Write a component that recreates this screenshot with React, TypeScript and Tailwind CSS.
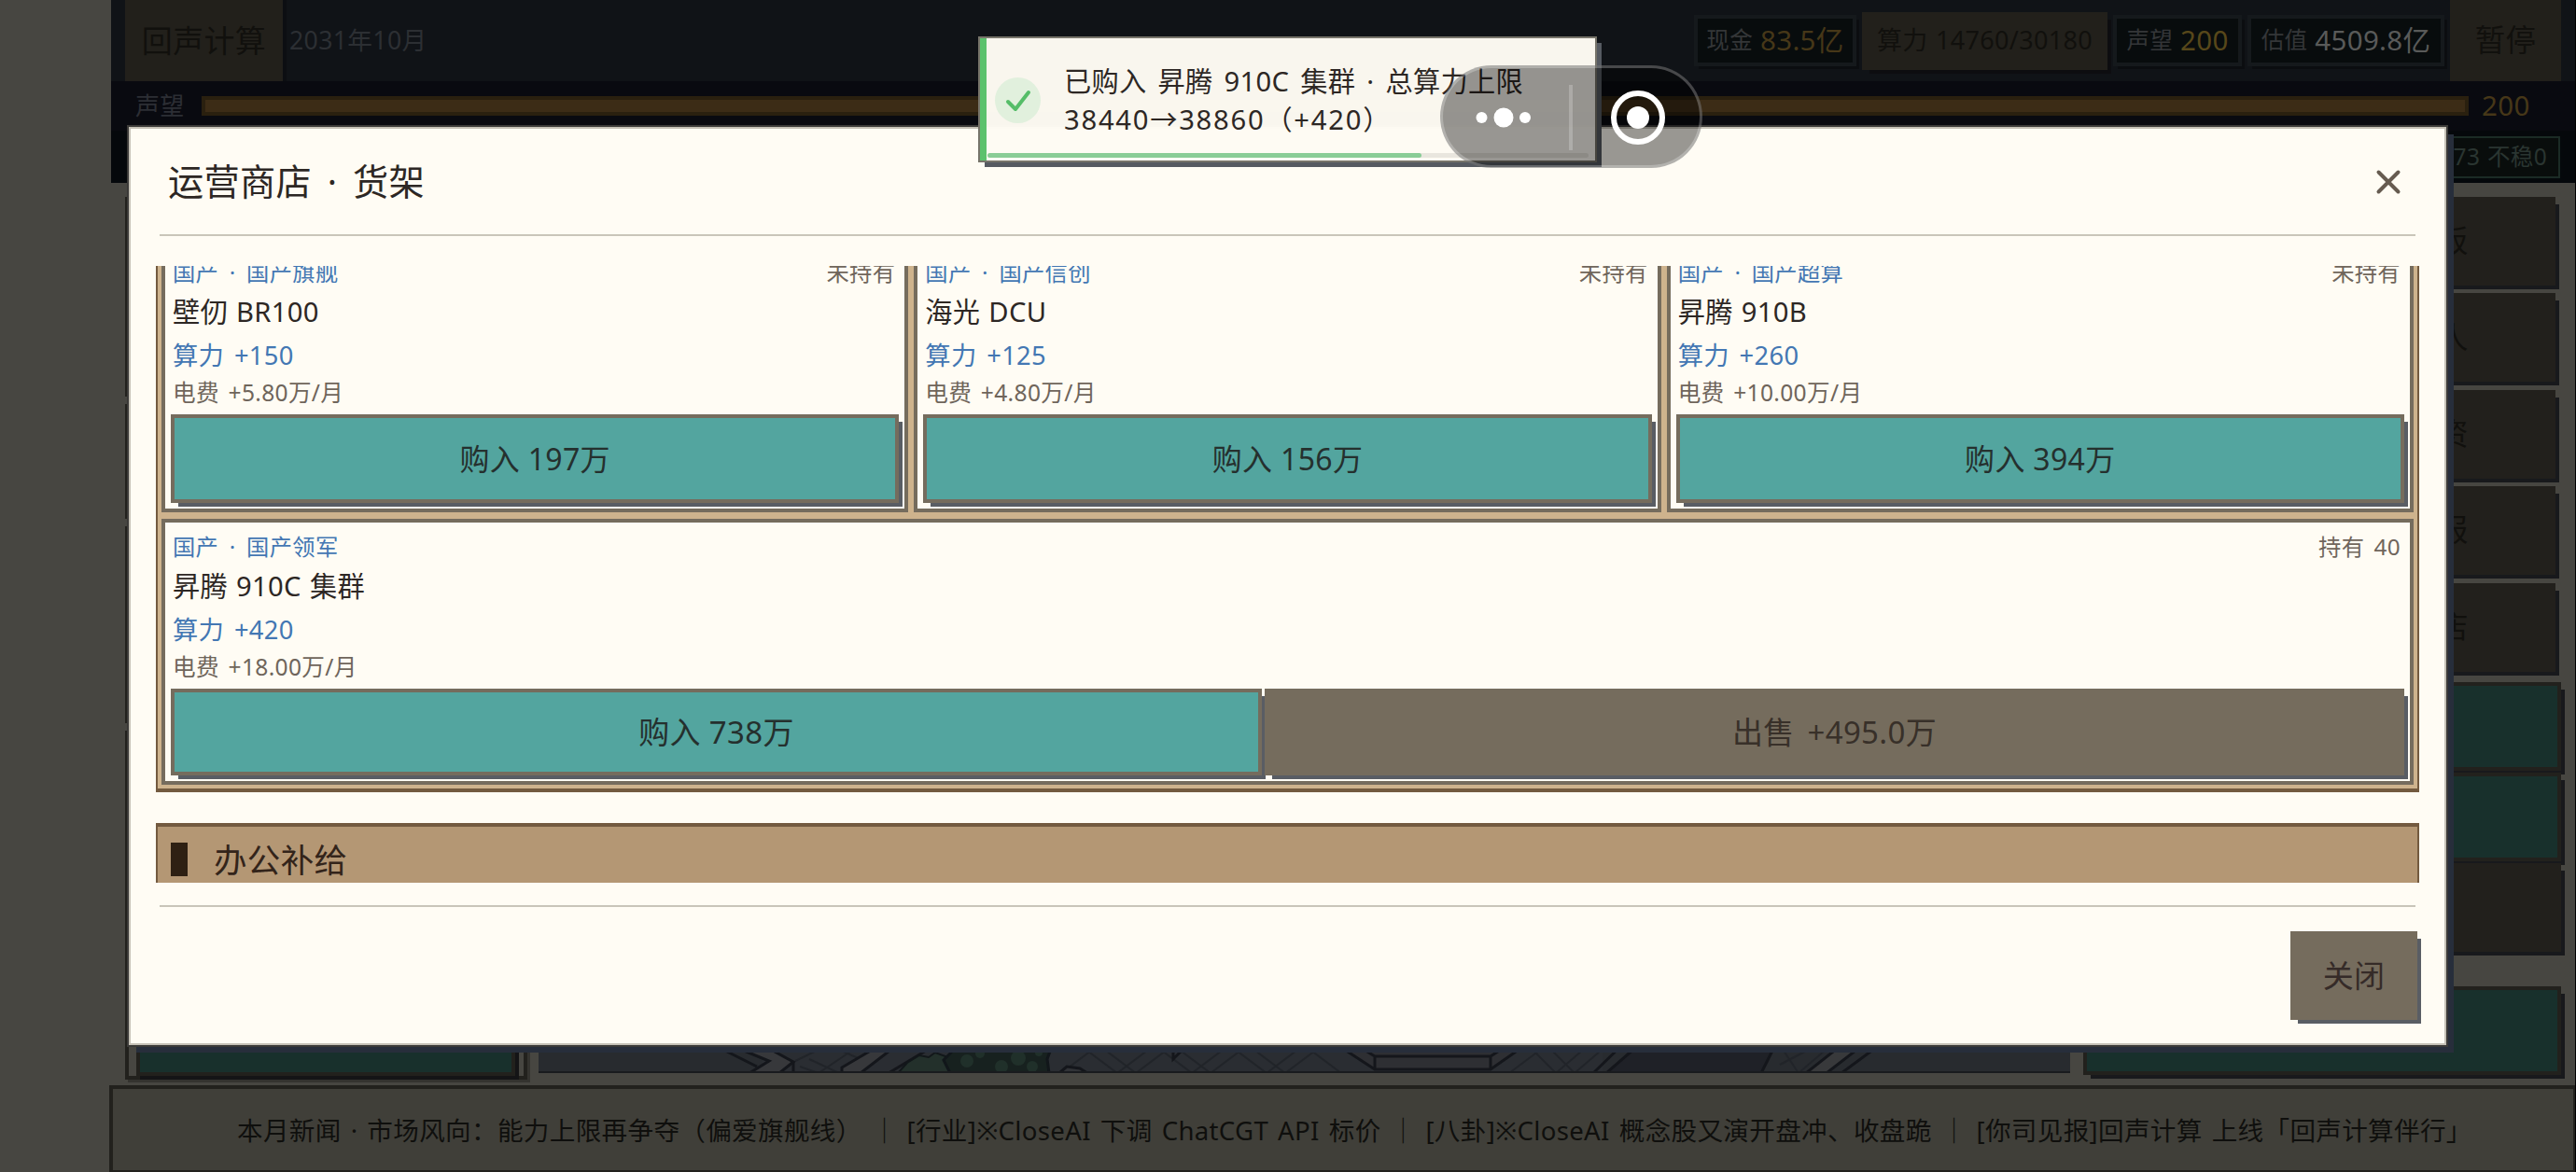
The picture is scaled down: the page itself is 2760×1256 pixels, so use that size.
import React from "react";
import clsx from "clsx";

type Gpu = {
  tag: string;
  name: string;
  power: string;
  fee: string;
  owned: string;
  buy: string;
  sell?: string;
};

const gpus: Gpu[] = [
  {
    tag: "国产 · 国产旗舰",
    name: "壁仞 BR100",
    power: "算力 +150",
    fee: "电费 +5.80万/月",
    owned: "未持有",
    buy: "购入 197万",
  },
  {
    tag: "国产 · 国产信创",
    name: "海光 DCU",
    power: "算力 +125",
    fee: "电费 +4.80万/月",
    owned: "未持有",
    buy: "购入 156万",
  },
  {
    tag: "国产 · 国产超算",
    name: "昇腾 910B",
    power: "算力 +260",
    fee: "电费 +10.00万/月",
    owned: "未持有",
    buy: "购入 394万",
  },
  {
    tag: "国产 · 国产领军",
    name: "昇腾 910C 集群",
    power: "算力 +420",
    fee: "电费 +18.00万/月",
    owned: "持有 40",
    buy: "购入 738万",
    sell: "出售 +495.0万",
  },
];

const menu = ["面板", "招人", "融资", "年报", "商店"];

function Stat({
  label,
  value,
  className,
}: {
  label: string;
  value: string;
  className: string;
}) {
  return (
    <div className="flex h-[55px] items-center justify-center gap-2 border-4 border-[#15191c] bg-[#080c0d] shadow-[4px_4px_0_-1px_#0b0d10]">
      <span className="text-[24.5px] text-[#343638]">{label}</span>
      <span className={clsx("text-[29.5px]", className)}>{value}</span>
    </div>
  );
}

function TopBar() {
  return (
    <header className="flex h-[87px] bg-[#101317] pl-[15px] pr-[15px]">
      <div className="flex w-[169px] items-center justify-center bg-[#22201b] text-[33px] text-[#11100d] shadow-[4px_0_0_#0c0e12]">
        回声计算
      </div>
      <div className="ml-[7px] flex items-center text-[26.7px] text-[#2c2f33]">
        2031年10月
      </div>
      <div className="ml-auto flex items-center gap-[6px]">
        <div className="grid w-[174px]">
          <Stat label="现金" value="83.5亿" className="text-[#463718]" />
        </div>
        <div className="flex h-[62px] w-[263px] items-center justify-center bg-[#22201b] text-[27px] text-[#11100d] shadow-[6px_6px_0_-2px_#0d0d10]">
          算力 14760/30180
        </div>
        <div className="grid w-[138px]">
          <Stat label="声望" value="200" className="text-[#57471a]" />
        </div>
        <div className="grid w-[211px]">
          <Stat label="估值" value="4509.8亿" className="text-[#595a59]" />
        </div>
        <div className="flex h-[87px] w-[119px] items-center justify-center bg-[#22201b] text-[32.5px] text-[#11100d]">
          暂停
        </div>
      </div>
    </header>
  );
}

function MapStrip() {
  return (
    <svg className="h-[939px] w-[1641px]" viewBox="0 0 1641 939" fill="none">
      <rect width="1641" height="939" fill="#282b2f" />
      {/* paving */}
      <path d="M240 905H1140V939H240Z" fill="#2a2d32" />
      <g stroke="#212429" strokeWidth="2">
        <path d="M275 926 310 909 345 924M280 932 300 939M290 924 322 939M300 939 340 912" />
        <path d="M560 939 600 909 640 939 680 909 720 939 760 909 800 939 840 909" />
        <path d="M580 909 620 939 660 909 700 939 740 909 780 939 820 909 860 939" />
        <path d="M1040 939 1080 909 1110 939 1145 909M1060 909 1090 939 1125 909" />
        <path d="M1330 909 1350 939 1385 909M1330 930 1370 909" />
      </g>
      {/* curbs and benches */}
      <g stroke="#14161b" strokeWidth="3">
        <path d="M190 910 234 932" />
        <path
          d="M208 910 247 926 226 939H258L273 927 240 909Z"
          fill="#37383b"
        />
        <path d="M273 927V939" />
        <path d="M366 909 325 933V939H345L384 909Z" fill="#37383b" />
        <path d="M425 909 375 939" />
        <path d="M680 905V924L690 914" />
        <path d="M558 939 566 932 580 934 588 939" fill="#313337" />
        <path d="M850 905 896 935H1020L1063 905Z" fill="#2e2f33" />
        <path d="M870 905 896 921H1020L1045 905M896 921V935M1020 921V935" />
        <path d="M1183 905 1144 939H1310L1327 905Z" fill="#1f2127" />
        <path d="M1165 905 1130 939" />
        <path d="M1401 905 1358 939H1380L1424 905Z" fill="#38393b" />
        <path d="M1442 905 1396 939" />
      </g>
      {/* bushes */}
      <path
        d="M385 939 395 928 408 920 418 922 425 917 436 921 441 939Z"
        fill="#23302b"
        stroke="#12171a"
        strokeWidth="2"
      />
      <path
        d="M441 939 434 925 442 917 440 905H552L545 924 547 939Z"
        fill="#17211f"
        stroke="#11161a"
        strokeWidth="3"
      />
      <g fill="#20302a">
        <circle cx="459" cy="926" r="7" />
        <circle cx="473" cy="918" r="5" />
        <circle cx="496" cy="932" r="7" />
        <circle cx="514" cy="923" r="8" />
        <circle cx="529" cy="932" r="6" />
        <circle cx="536" cy="917" r="4" />
      </g>
      <path d="M0 938H1641" stroke="#191b1e" strokeWidth="2" />
    </svg>
  );
}

function TealButton({ className }: { className: string }) {
  return (
    <div
      className={clsx(
        "border-4 border-[#22211d] bg-[#18302c] shadow-[6px_6px_0_-2px_#18191c]",
        className
      )}
    ></div>
  );
}

function GameScreen() {
  return (
    <div className="flex h-[1256px] w-[2760px] bg-[#474641] pl-[119px]">
      <div className="flex w-[2640px] flex-col">
        <TopBar />
        <div className="flex h-[53px] items-center bg-[#090a10] pl-[26px]">
          <span className="w-[71px] text-[26px] text-[#2c2e34]">声望</span>
          <div className="h-[21px] w-[2429px] border-4 border-[#2a200f] bg-[#3c2c16]"></div>
          <span className="ml-[14px] text-[29.5px] text-[#463718]">200</span>
        </div>
        <div className="flex h-14 items-center justify-end bg-[#05080b] pr-4">
          <div className="flex h-[45px] items-center border-2 border-[#1b2b25] bg-[#090d0c] px-3 text-[24.5px] text-[#2a3531]">
            稳定73 不稳0
          </div>
        </div>

        <div className="flex h-[967px] pl-[15px] pt-[15px]">
          <div className="flex w-[431px] flex-col gap-2">
            <div className="h-[214px] border-4 border-[#22211d]"></div>
            <div className="h-[123px] border-4 border-[#22211d]"></div>
            <div className="h-[211px] border-4 border-[#22211d]"></div>
            <div className="flex h-[374px] flex-col justify-end border-4 border-[#22211d] pl-2 pr-[9px] shadow-[3px_3px_0_#34332f]">
              <div className="h-[180px] border-4 border-[#22211d] bg-[#18302c] shadow-[4px_4px_0_#141416]"></div>
            </div>
          </div>
          <div className="ml-3">
            <MapStrip />
          </div>
          <div className="ml-[14px] flex w-[512px] flex-col">
            <div className="flex flex-col items-end gap-[8.4px] pr-[6px]">
              {menu.map((item) => (
                <div
                  key={item}
                  className="flex h-[95px] w-[252px] items-center justify-center bg-[#22201c] text-[32.5px] text-[#11100d] shadow-[6px_6px_0_-2px_#18191c]"
                >
                  {item}
                </div>
              ))}
            </div>
            <TealButton className="mt-[11px] h-[95px]" />
            <TealButton className="mt-[2px] h-[95px]" />
            <div className="mt-[2px] h-[95px] bg-[#22201c] shadow-[6px_6px_0_-2px_#18191c]"></div>
            <TealButton className="mt-[37px] h-[95px]" />
          </div>
        </div>

        <footer className="-ml-[2px] flex h-[93px] items-center border-4 border-b-2 border-r-2 border-[#22211d] bg-[#403f39] pl-[133px] pt-[2px] text-[27.6px] text-[#0f0f0d] whitespace-pre [word-spacing:0.09em]">
          本月新闻 · 市场风向：能力上限再争夺（偏爱旗舰线） ｜ [行业]※CloseAI 下调
          ChatCGT API 标价 ｜ [八卦]※CloseAI 概念股又演开盘冲、收盘跪 ｜
          [你司见报]回声计算 上线「回声计算伴行」
        </footer>
      </div>
      <div className="w-px bg-black"></div>
    </div>
  );
}

function GpuCard({ data }: { data: Gpu }) {
  return (
    <div
      className={clsx(
        "flex flex-col border-4 border-[#756c5d] bg-[#fffcf4] px-[6px] pb-[6px] pt-[10px]",
        data.sell && "col-span-3"
      )}
    >
      <div className="flex justify-between pl-[2px] pr-1 text-[24.3px] leading-[31px]">
        <span className="text-[#4377b3] [word-spacing:0.2em]">{data.tag}</span>
        <span className="text-[#6f655b] [word-spacing:0.15em]">
          {data.owned}
        </span>
      </div>
      <h3 className="pl-[2px] text-[29.2px] leading-[55px] text-[#2d2724]">
        {data.name}
      </h3>
      <p className="pl-[2px] text-[27.3px] leading-[38px] text-[#4377b3] [word-spacing:0.12em]">
        {data.power}
      </p>
      <p className="mb-[3px] pl-[2px] text-[24.6px] leading-[41px] text-[#6f655b] [word-spacing:0.12em]">
        {data.fee}
      </p>
      <div className="flex flex-1 gap-[3px]">
        <button
          className={clsx(
            "border-4 border-[#756c5d] bg-[#53a59f] text-[#25302e] shadow-[6px_6px_0_-2px_#595d64]",
            data.sell ? "w-[1169px] text-[33px]" : "flex-1 text-[32px]"
          )}
        >
          {data.buy}
        </button>
        {data.sell && (
          <button className="flex-1 bg-[#756c5d] text-[33px] text-[#383029] shadow-[6px_6px_0_-2px_#595d64] [word-spacing:0.15em]">
            {data.sell}
          </button>
        )}
      </div>
    </div>
  );
}

function ShopDialog() {
  return (
    <div className="absolute left-[138px] top-[136px] flex h-[984px] w-[2483px] flex-col border-2 border-[#c5c1b6] bg-[#fffcf4] px-[27px] shadow-[0_0_0_2px_#3b3a38,8px_8px_0_#272e3b]">
      <div className="mx-1 flex h-[115px] items-center justify-between border-b-2 border-[#c9c5b9] pl-[9px] pr-[15px]">
        <h2 className="text-[38.2px] text-[#2d2724] [word-spacing:0.17em]">
          运营商店 · 货架
        </h2>
        <svg
          width="28"
          height="28"
          viewBox="0 0 28 28"
          stroke="#665b50"
          strokeWidth="4"
          strokeLinecap="round"
        >
          <path d="M3.5 3.5 24.5 24.5M24.5 3.5 3.5 24.5" />
        </svg>
      </div>

      <div className="mt-8 h-[661px] overflow-hidden">
        <div className="-mt-[23px] grid grid-cols-3 grid-rows-[287px_285px] gap-x-[6px] gap-y-[7px] border-x-2 border-b-4 border-[#735a3f] bg-[#ceb38d] px-1 pb-1">
          {gpus.map((gpu) => (
            <GpuCard key={gpu.name} data={gpu} />
          ))}
        </div>
        <div className="mt-[33px] flex h-[90px] gap-[28px] border-x-2 border-t-4 border-[#735a3f] bg-[#b49774] pl-[14px] pt-[9px]">
          <div className="mt-2 h-9 w-[18px] bg-[#2e2013]"></div>
          <h3 className="text-[35.5px] leading-[52px] text-[#33241a]">
            办公补给
          </h3>
        </div>
      </div>

      <div className="mx-1 mt-6 border-b-2 border-[#c9c5b9]"></div>
      <div className="flex justify-end pr-[2px] pt-[26px]">
        <button className="h-[95px] w-[136px] bg-[#756c5d] text-[33px] text-[#352b28] shadow-[6px_6px_0_-2px_#595d64]">
          关闭
        </button>
      </div>
    </div>
  );
}

function Toast() {
  return (
    <div className="absolute left-[1048px] top-[39px] h-[135px] w-[663px] border-2 border-[#77746a] bg-[#fefbf3]/98 shadow-[6px_6px_0_-1px_#565a61]">
      <div className="flex h-full border-l-[7px] border-[#5cc26d]">
        <div className="ml-[9px] mt-[42px] flex size-[49px] items-center justify-center rounded-full bg-[#e1f0dd]">
          <svg
            width="30"
            height="30"
            viewBox="0 0 30 30"
            fill="none"
            stroke="#55bd68"
            strokeWidth="4"
            strokeLinecap="round"
            strokeLinejoin="round"
          >
            <path d="M4 16 12 24 26 6" />
          </svg>
        </div>
        <div className="ml-[25px] mt-[26px] text-[29.2px] leading-[41px] text-[#2d2724] whitespace-nowrap [word-spacing:0.14em]">
          <p>已购入 昇腾 910C 集群 · 总算力上限</p>
          <p className="tracking-[0.06em]">38440→38860（+420）</p>
        </div>
      </div>
      <div className="absolute bottom-[3px] left-2 right-[7px] h-[5px] rounded-full bg-[#e9e6de]">
        <div className="h-full w-[465px] rounded-full bg-[#8acd96]"></div>
      </div>
    </div>
  );
}

// capsule of the mini program host: menu dots and exit target
function HostCapsule() {
  return (
    <div className="absolute left-[1543px] top-[70px] flex h-[110px] w-[281px] rounded-full border-3 border-white/25 bg-black/40">
      <svg className="-m-[3px]" width="281" height="110" fill="#fff">
        <circle cx="44.5" cy="56" r="6" />
        <circle cx="68" cy="56" r="10.5" />
        <circle cx="91" cy="56" r="6" />
        <rect x="138" y="21" width="4" height="70" fillOpacity="0.22" />
        <circle
          cx="212"
          cy="56"
          r="26"
          fill="none"
          stroke="#fff"
          strokeWidth="6"
        />
        <circle cx="212" cy="56" r="12" />
      </svg>
    </div>
  );
}

export default function App() {
  return (
    <div className="relative h-[1256px] w-[2760px] overflow-hidden font-['Noto_Sans','Noto_Sans_CJK_SC',sans-serif] tracking-[0.02em] [word-spacing:0.07em]">
      <GameScreen />
      <ShopDialog />
      <Toast />
      <HostCapsule />
    </div>
  );
}
